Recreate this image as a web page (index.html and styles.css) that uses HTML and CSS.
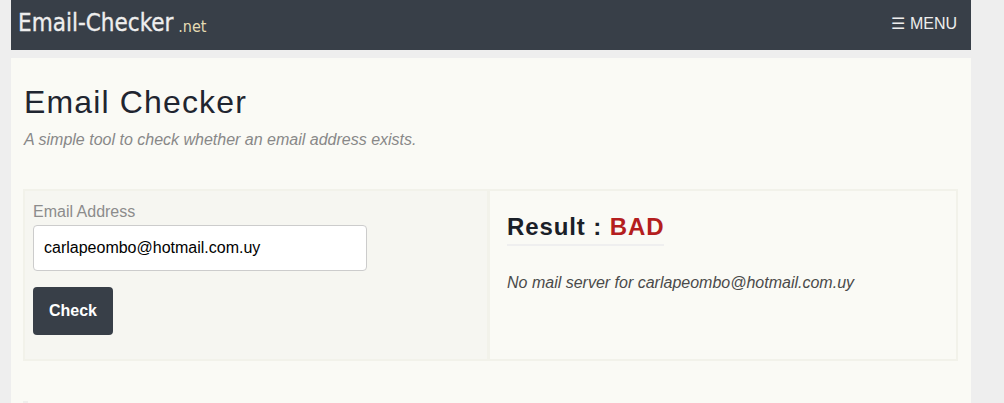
FILE: index.html
```html
<!DOCTYPE html>
<html lang="en">
<head>
  <meta charset="UTF-8" />
  <meta name="viewport" content="width=device-width, initial-scale=1.0" />
  <title>Email Checker</title>
  <link rel="stylesheet" href="styles.css">
</head>
<body>
  <header class="topbar">
    <a class="logo" href="#">Email-Checker <small>.net</small></a>
    <a class="menu" href="#">☰ MENU</a>
  </header>

  <main class="content">
    <h1>Email Checker</h1>
    <p class="tagline">A simple tool to check whether an email address exists.</p>

    <div class="panels">
      <form class="check-form">
        <label for="email">Email Address</label>
        <input type="text" id="email" value="carlapeombo@hotmail.com.uy" />
        <button type="button">Check</button>
      </form>
      <section class="result">
        <h2>Result : <span class="bad">BAD</span></h2>
        <p>No mail server for carlapeombo@hotmail.com.uy</p>
      </section>
    </div>

    <div class="next-panel"></div>
  </main>
</body>
</html>
```

FILE: styles.css
```css
html, body {
  height: 100%;
  overflow: hidden;
}
body {
  display: flex;
  flex-direction: column;
  box-sizing: border-box;
  font-family: "Liberation Sans", Arial, sans-serif;
  margin: 0;
  padding: 0 33px 0 11px;
  background: #eeeeee;
}
/* Top bar */
.topbar {
  display: flex;
  flex: none;
  justify-content: space-between;
  align-items: center;
  box-sizing: border-box;
  height: 50px;
  padding: 0 14px 4px 7px;
  background: #383f48;
}
.logo {
  color: #eeeeee;
  font-family: "DejaVu Sans Condensed", "DejaVu Sans", sans-serif;
  font-stretch: condensed;
  font-size: 24px;
  text-decoration: none;
  -webkit-text-stroke: 0.3px #eeeeee;
}
.logo small {
  margin-left: -2px;
  color: #e6dcb4;
  font-size: 16px;
  vertical-align: -1px;
  -webkit-text-stroke: 0;
}
.menu {
  color: #eeeeee;
  font-size: 16px;
  text-decoration: none;
}
/* Main */
.content {
  flex: 1;
  margin-top: 8px;
  padding: 25px 13px 0 12px;
  overflow: hidden;
  background: #fafaf5;
}
h1 {
  margin: 0;
  padding-left: 1px;
  color: #1f2530;
  font-size: 32px;
  font-weight: 400;
  letter-spacing: 1.15px;
  line-height: 38px;
}
.tagline {
  margin: 9px 0 0;
  padding-left: 1px;
  color: #888888;
  font-size: 16px;
  font-style: italic;
  line-height: 20px;
}
/* Panels */
.panels {
  display: grid;
  grid-template-columns: 465px 1fr;
  margin-top: 39px;
  height: 172px;
  box-sizing: border-box;
  border: 2px solid #f2f2ea;
}
.check-form {
  display: flex;
  flex-direction: column;
  align-items: flex-start;
  padding: 11px 8px 0;
  background: #f6f6f1;
  border-right: 3px solid #f2f2ea;
}
.check-form label {
  color: #8c8c8c;
  font-size: 16px;
  line-height: 20px;
}
.check-form input {
  box-sizing: border-box;
  width: 334px;
  height: 46px;
  margin-top: 3px;
  padding: 0 10px;
  color: #000;
  background: #fff;
  border: 1px solid #cccccc;
  border-radius: 4px;
  font: 16px "Liberation Sans", Arial, sans-serif;
}
.check-form button {
  width: 80px;
  height: 48px;
  margin-top: 16px;
  color: #fff;
  background: #383f48;
  border: 0;
  border-radius: 4px;
  font: bold 16px "Liberation Sans", Arial, sans-serif;
}
.result {
  padding: 22px 17px 0;
}
.result h2 {
  display: inline-block;
  margin: 0;
  padding-bottom: 3px;
  color: #1a2028;
  font-size: 24px;
  letter-spacing: 0.9px;
  line-height: 28px;
  border-bottom: 2px solid #efefef;
}
.bad {
  color: #b41e1e;
}
.result p {
  margin: 27px 0 0;
  color: #4a4a4a;
  font-size: 16px;
  font-style: italic;
  line-height: 20px;
}
.next-panel {
  width: 5px;
  height: 2px;
  margin-top: 40px;
  background: #efefec;
}
```
